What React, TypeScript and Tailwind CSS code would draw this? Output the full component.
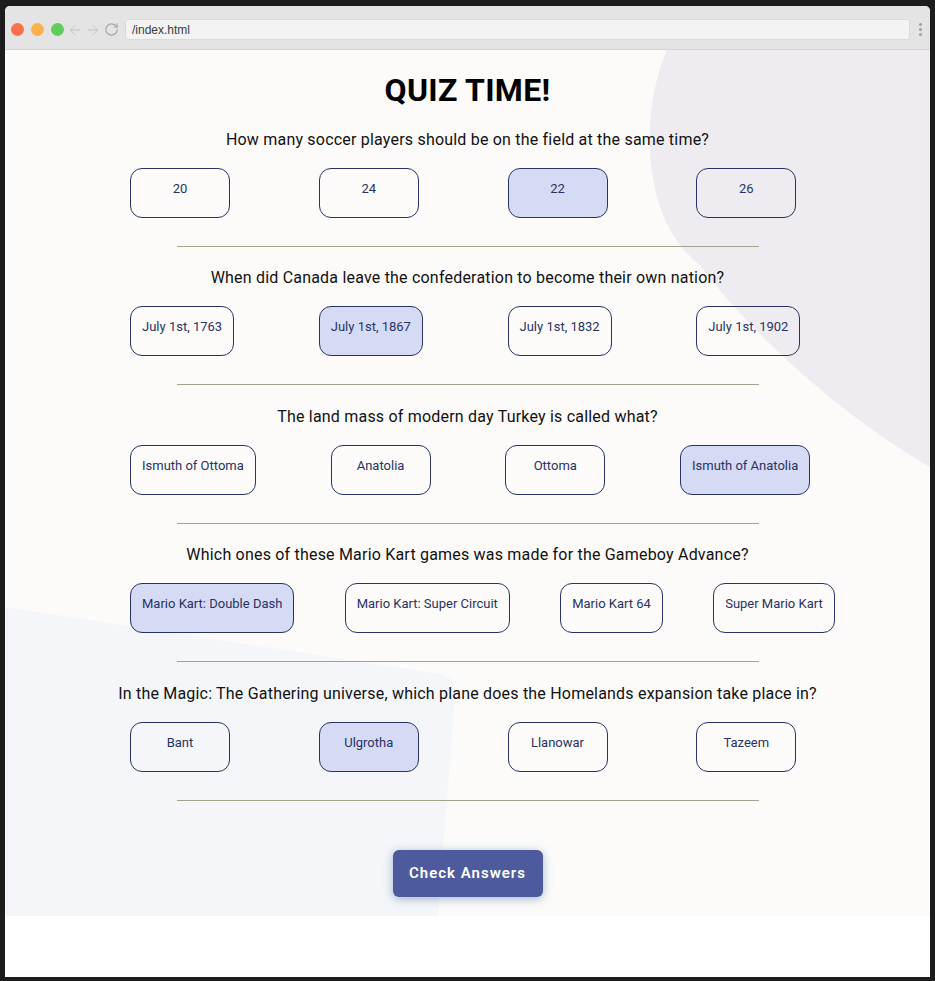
import { RotateCw, ArrowLeft, ArrowRight } from 'lucide-react';

type Question = {
  text: string;
  answers: string[];
  picked: number;
};

const questions: Question[] = [
  { text: 'How many soccer players should be on the field at the same time?', answers: ['20', '24', '22', '26'], picked: 2 },
  {
    text: 'When did Canada leave the confederation to become their own nation?',
    answers: ['July 1st, 1763', 'July 1st, 1867', 'July 1st, 1832', 'July 1st, 1902'],
    picked: 1,
  },
  {
    text: 'The land mass of modern day Turkey is called what?',
    answers: ['Ismuth of Ottoma', 'Anatolia', 'Ottoma', 'Ismuth of Anatolia'],
    picked: 3,
  },
  {
    text: 'Which ones of these Mario Kart games was made for the Gameboy Advance?',
    answers: ['Mario Kart: Double Dash', 'Mario Kart: Super Circuit', 'Mario Kart 64', 'Super Mario Kart'],
    picked: 0,
  },
  {
    text: 'In the Magic: The Gathering universe, which plane does the Homelands expansion take place in?',
    answers: ['Bant', 'Ulgrotha', 'Llanowar', 'Tazeem'],
    picked: 1,
  },
];

// spacing above each question line (sections alternate 138 / 139px)
const questionGap = ['mt-[20px]', 'mt-[21px]', 'mt-[22px]', 'mt-[21px]', 'mt-[22px]'];

const BrowserBar = () => (
  <div className="flex h-[44px] shrink-0 items-center border-b border-[#d3d3d3] bg-[#e4e4e4] pl-[6px] pr-[8px] pt-[4px]">
    <div className="flex items-center gap-[7px]">
      <span className="h-[13px] w-[13px] rounded-full bg-[#f9704d]" />
      <span className="h-[13px] w-[13px] rounded-full bg-[#fbb24b]" />
      <span className="h-[13px] w-[13px] rounded-full bg-[#62cc5b]" />
    </div>
    <div className="ml-[3px] flex items-center gap-[2px] text-[#c4c4c4]">
      <ArrowLeft size={16} strokeWidth={1.5} />
      <ArrowRight size={16} strokeWidth={1.5} />
    </div>
    <RotateCw size={15} strokeWidth={1.8} className="ml-[3px] text-[#a0a6ad]" />
    <div className="ml-[6px] flex h-[21px] flex-1 items-center rounded-[3px] border border-[#dadada] bg-[#f3f3f3] px-[6px] font-['Liberation_Sans',sans-serif] text-[12px] text-[#3c3c3c]">
      /index.html
    </div>
    <div className="ml-[9px] flex flex-col gap-[2px]">
      <span className="h-[3px] w-[3px] rounded-full bg-[#9ba1a9]" />
      <span className="h-[3px] w-[3px] rounded-full bg-[#9ba1a9]" />
      <span className="h-[3px] w-[3px] rounded-full bg-[#9ba1a9]" />
    </div>
  </div>
);

const App = () => {
  return (
    <div className="h-[981px] w-[935px] bg-[#1c1c1c] px-[5px] pb-[4px] pt-[6px]">
      <div className="flex h-full flex-col overflow-hidden rounded-t-[5px] bg-white">
        <BrowserBar />
        <main className="relative h-[866px] shrink-0 overflow-hidden bg-[#fcfbfa] font-['Roboto',sans-serif]">
          {/* background blobs */}
          <svg className="absolute inset-0 h-full w-full" viewBox="0 0 925 866">
            <path d="M 662 0 C 635 60, 635 170, 695 215 C 735 270, 825 360, 930 420 L 930 0 Z" fill="#efecf1" />
            <path d="M 0 557 L 435 624 Q 451 627 450 645 L 433 866 L 0 866 Z" fill="#f4f6fa" />
          </svg>

          <div className="relative flex flex-col items-center">
            <h1 className="mt-[20px] text-[32px] font-bold leading-[40px] tracking-[0.3px] text-black">QUIZ TIME!</h1>

            {questions.map((q, qi) => (
              <section key={qi} className="flex w-full flex-col items-center">
                <p className={`${questionGap[qi]} text-[16px] leading-[20px] tracking-[0.2px] text-[#111111]`}>{q.text}</p>
                <div className="ml-[125px] mt-[18px] flex w-[755px] self-start">
                  {q.answers.map((a, ai) => (
                    <div key={a} className="grow">
                      <button
                        className={`flex h-[50px] min-w-[100px] justify-center rounded-[12px] border border-[#293264] px-[11px] pt-[12px] text-[13px] leading-[16px] text-[#293264] ${
                          ai === q.picked ? 'bg-[#d6dbf5]' : 'bg-transparent'
                        }`}
                      >
                        {a}
                      </button>
                    </div>
                  ))}
                </div>
                <div className="mt-[28px] h-px w-[582px] bg-[#a3a28c]" />
              </section>
            ))}

            <button className="mt-[49px] h-[47px] w-[150px] rounded-[6px] bg-[#4d5b9e] text-[15px] font-semibold tracking-[1px] text-white shadow-[0_2px_10px_rgba(70,120,160,0.5)]">
              Check Answers
            </button>
          </div>
        </main>
      </div>
    </div>
  );
};

export default App;
